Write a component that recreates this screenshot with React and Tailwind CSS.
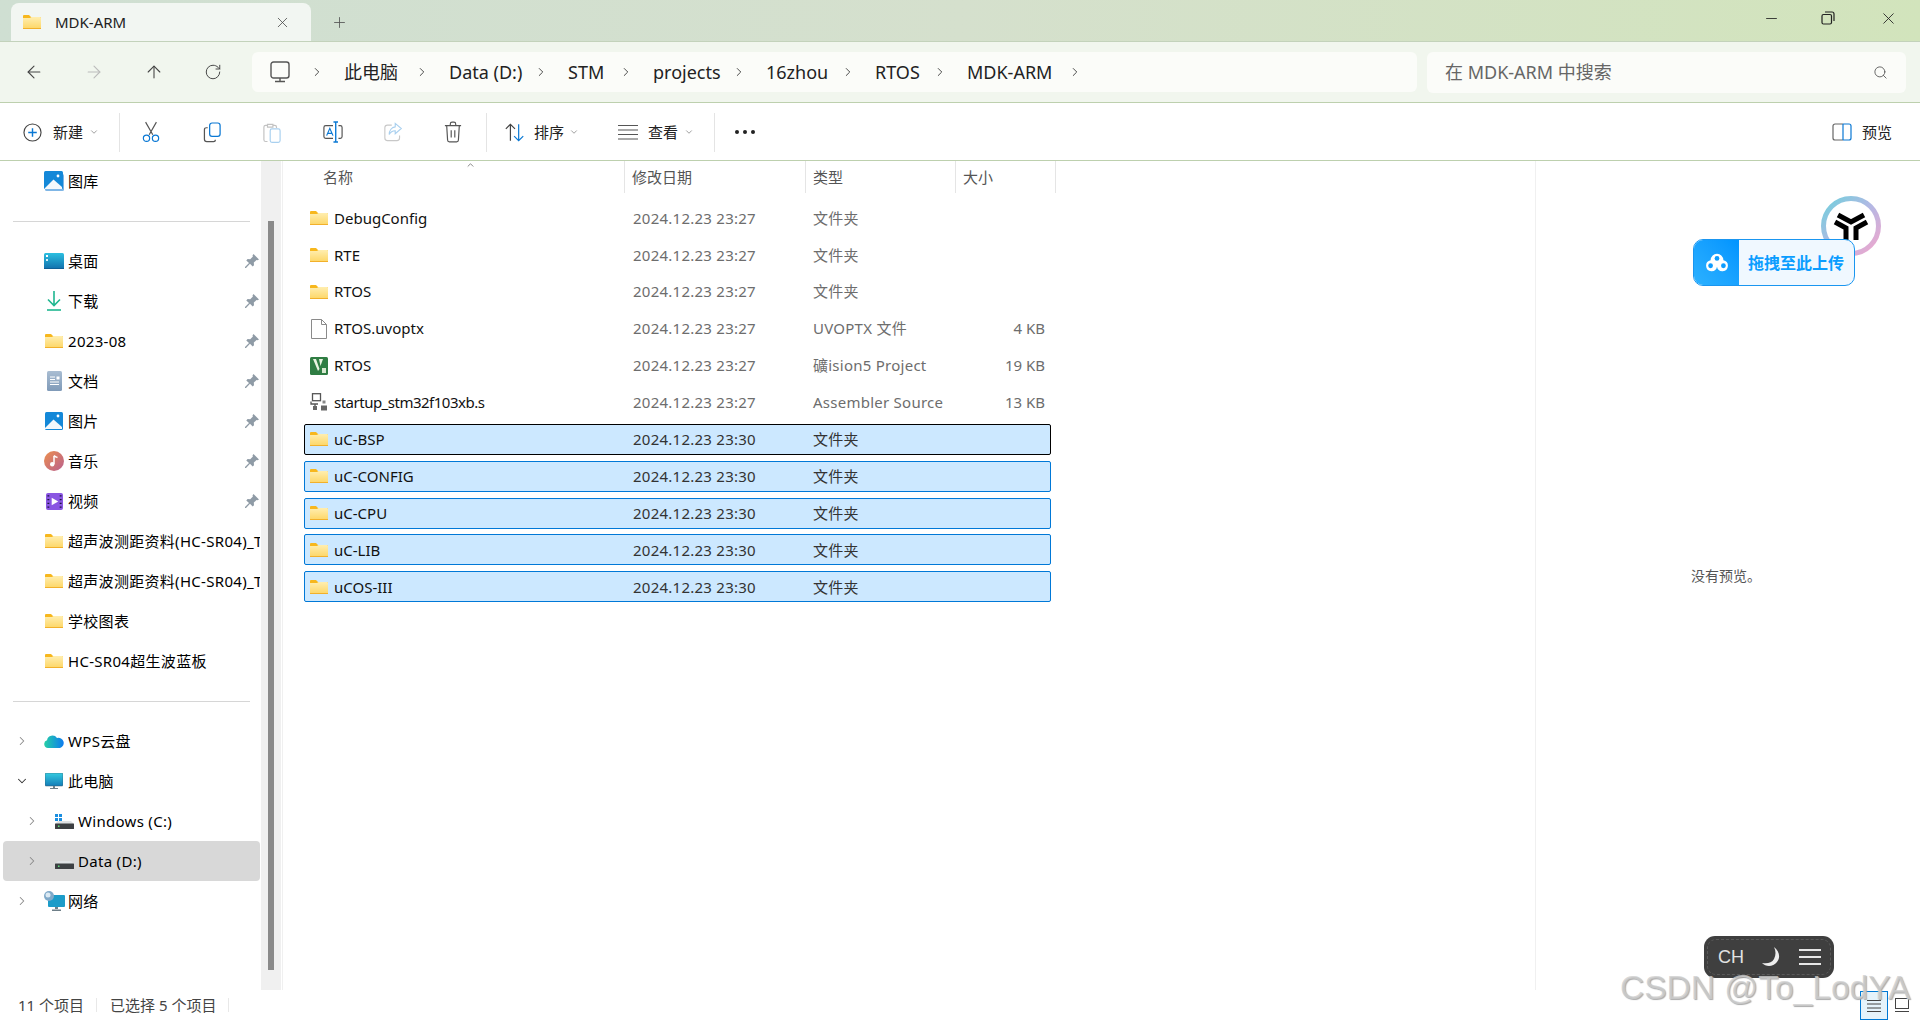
import { ArrowLeft, ArrowRight, ArrowUp, RotateCw, ChevronRight, ChevronDown, ChevronUp, Search, X, Plus, Minus } from 'lucide-react';

const Folder = ({ className = 'w-[18px] h-[14px]' }) => (
  <svg viewBox="0 0 18 14" className={`${className} shrink-0`}>
    <defs>
      <linearGradient id="fold" x1="0" y1="0" x2="0" y2="1">
        <stop offset="0" stopColor="#ffeeb0" />
        <stop offset="1" stopColor="#fdd665" />
      </linearGradient>
    </defs>
    <path d="M0 1a1 1 0 0 1 1-1h5l2 2h9a1 1 0 0 1 1 1v2H0z" fill="#f7b71d" />
    <path d="M0 3h7l1.5-1H17a1 1 0 0 1 1 1v10a1 1 0 0 1-1 1H1a1 1 0 0 1-1-1z" fill="url(#fold)" />
    <rect x="0" y="13" width="18" height="1" fill="#f2b02a" />
  </svg>
);

const Picture = ({ gallery }) => (
  <svg viewBox="0 0 20 20" className="w-[20px] h-[20px] shrink-0">
    {gallery && <rect x="1" y="3" width="19" height="17" rx="1.5" fill="#7fb6e6" />}
    <rect x="0" y="0" width={gallery ? 19 : 18} height={gallery ? 18 : 18} rx="1.5" transform={gallery ? '' : 'translate(1 1)'} fill="#1488d8" />
    <path d="M1 17 9.5 8.5 18 16v2H1z" fill="#f4f8fc" />
    <circle cx="14" cy="5" r="1.4" fill="#fff" />
  </svg>
);

const Desktop = () => (
  <svg viewBox="0 0 20 16" className="w-[20px] h-[16px] shrink-0">
    <defs>
      <linearGradient id="desk" x1="0" y1="0" x2="0" y2="1">
        <stop offset="0" stopColor="#2bbfe0" />
        <stop offset="1" stopColor="#1170ad" />
      </linearGradient>
    </defs>
    <rect width="20" height="16" rx="1.5" fill="url(#desk)" />
    <rect x="2" y="2" width="2" height="2" fill="#fff" />
    <rect x="2" y="6" width="2" height="2" fill="#d6f2fb" />
    <rect x="0" y="15" width="20" height="1" fill="#0f5f96" />
  </svg>
);

const Download = () => (
  <svg viewBox="0 0 16 20" className="w-[16px] h-[20px] shrink-0" fill="none" stroke="#1fb690" strokeWidth="1.6">
    <path d="M8 0v14M2 8.5l6 6 6-6" />
    <path d="M1 19h14" />
  </svg>
);

const Doc = () => (
  <svg viewBox="0 0 15 20" className="w-[15px] h-[20px] shrink-0">
    <defs>
      <linearGradient id="doc" x1="0" y1="0" x2="0" y2="1">
        <stop offset="0" stopColor="#a9bdd2" />
        <stop offset="1" stopColor="#7f9ab8" />
      </linearGradient>
    </defs>
    <rect width="15" height="20" rx="1.5" fill="url(#doc)" />
    <path d="M3 6h5M3 8.5h5M3 11h9M3 13.5h9" stroke="#fff" strokeWidth="1" />
    <rect x="9.5" y="5.5" width="3" height="3" fill="#fff" />
  </svg>
);

const Music = () => (
  <svg viewBox="0 0 20 20" className="w-[20px] h-[20px] shrink-0">
    <defs>
      <linearGradient id="mus" x1="0" y1="0" x2="1" y2="1">
        <stop offset="0" stopColor="#ec8f4e" />
        <stop offset="1" stopColor="#b9608f" />
      </linearGradient>
    </defs>
    <circle cx="10" cy="10" r="10" fill="url(#mus)" />
    <path d="M10 5v8" stroke="#fff" strokeWidth="1.5" />
    <path d="M10 4.5c1 1.5 2.5 1.5 3.5 2" stroke="#fff" strokeWidth="1.5" fill="none" />
    <circle cx="8.2" cy="13.2" r="2.2" fill="#fff" />
  </svg>
);

const Video = () => (
  <svg viewBox="0 0 18 18" className="w-[17px] h-[17px] shrink-0">
    <rect width="18" height="18" rx="2" fill="#8a56e2" />
    <path d="M6 5v8l7-4z" fill="#fff" />
    <path d="M1.5 3h2M1.5 7h2M1.5 11h2M1.5 15h2M14.500 3h2M14.500 7h2M14.500 11h2M14.500 15h2" stroke="#1d1440" strokeWidth="1.4" />
  </svg>
);

const Pin = () => (
  <svg viewBox="0 0 14 14" className="w-[14px] h-[14px] shrink-0" fill="#8f9ba6">
    <path d="M8.500 0 14 5.500l-1.500.8-1-.4-2.700 2.700.2 2.600-1.300 1.300-2.700-2.700L1 14l-1 0 0-1 4-3.900-2.700-2.700 1.300-1.300 2.600.2 2.700-2.700-.4-1z" />
  </svg>
);

const Cloud = () => (
  <svg viewBox="0 0 20 14" className="w-[20px] h-[14px] shrink-0">
    <defs>
      <linearGradient id="wps" x1="0" y1="0" x2="1" y2="0">
        <stop offset="0" stopColor="#25cfa6" />
        <stop offset="1" stopColor="#0e7bf0" />
      </linearGradient>
    </defs>
    <path d="M4 14a4 4 0 0 1-1-7.800A5.500 5.500 0 0 1 13 4a4.500 4.500 0 0 1 3 10z" fill="url(#wps)" />
  </svg>
);

const Monitor = () => (
  <svg viewBox="0 0 18 16" className="w-[18px] h-[16px] shrink-0">
    <defs>
      <linearGradient id="pc" x1="0" y1="0" x2="0" y2="1">
        <stop offset="0" stopColor="#35cbe0" />
        <stop offset="1" stopColor="#137db8" />
      </linearGradient>
    </defs>
    <rect width="18" height="13" rx="1" fill="url(#pc)" stroke="#3a5a6a" strokeWidth=".5" />
    <path d="M8 13h2v2H8zM5 15h8v1H5z" fill="#6e7f88" />
  </svg>
);

const Drive = ({ win }) => (
  <svg viewBox="0 0 19 15" className="w-[19px] h-[15px] shrink-0">
    {win && <path d="M0 0h3v3H0zM4 0h3v3H4zM0 4h3v3H0zM4 4h3v3H4z" fill="#1a8ee0" />}
    <path d="M3 7h13l3 3H0z" fill="#dfe2e4" />
    <rect x="0" y="9.500" width="19" height="5.500" rx=".5" fill="#3d4043" />
    <rect x="3" y="11.500" width="1.500" height="1.500" fill="#5ee07c" />
  </svg>
);

const Network = () => (
  <svg viewBox="0 0 21 20" className="w-[21px] h-[20px] shrink-0">
    <rect x="4" y="4" width="17" height="12" rx="1" fill="#1c9cc9" />
    <path d="M11 16h3v2h-3zM8 18.500h9V20H8z" fill="#6e7f88" />
    <circle cx="5" cy="5" r="5" fill="#7fa9c9" />
    <circle cx="4" cy="4" r="2.500" fill="#dbe9f3" />
  </svg>
);

const BlankFile = () => (
  <svg viewBox="0 0 18 20" className="w-[18px] h-[20px] shrink-0" fill="#fff" stroke="#8a8a8a" strokeWidth="1">
    <path d="M1.500.5h10l5 5v14h-15z" />
    <path d="M11.500.5v5h5" fill="none" />
  </svg>
);

const UVision = () => (
  <svg viewBox="0 0 18 18" className="w-[18px] h-[18px] shrink-0">
    <rect width="18" height="18" rx="1.500" fill="#2f7d43" />
    <path d="M3 2l5 12 1.500-2L6 2zM9 2l1.500 7L13 2z" fill="#e8f3e0" />
    <path d="M12 11h4v5h-4z" fill="#d7e8d0" />
  </svg>
);

const AsmFile = () => (
  <svg viewBox="0 0 18 18" className="w-[18px] h-[18px] shrink-0" fill="none" stroke="#555" strokeWidth="1.300">
    <rect x="2.500" y=".7" width="8" height="7" />
    <path d="M1 8.500v2.500h7M5 11v4" />
    <rect x="3" y="13" width="4" height="4" fill="#666" stroke="none" />
    <rect x="12.500" y="7.500" width="3" height="3" fill="#888" stroke="none" />
    <rect x="11" y="12.500" width="6" height="5" fill="#666" stroke="none" />
  </svg>
);

const Chev = ({ open }) =>
  open ? (
    <ChevronDown className="w-[14px] h-[14px] text-[#333]" strokeWidth={1.8} />
  ) : (
    <ChevronRight className="w-[14px] h-[14px] text-[#8a8a8a]" strokeWidth={1.8} />
  );

const pinned = [
  ['桌面', <Desktop />],
  ['下载', <span className="w-[20px] flex justify-center"><Download /></span>],
  ['2023-08', <Folder className="w-[18px] h-[14px] mx-px" />],
  ['文档', <span className="w-[20px] flex justify-center"><Doc /></span>],
  ['图片', <Picture />],
  ['音乐', <Music />],
  ['视频', <span className="w-[20px] flex justify-center"><Video /></span>],
];

const recent = ['超声波测距资料(HC-SR04)_TTL', '超声波测距资料(HC-SR04)_TTL', '学校图表', 'HC-SR04超生波蓝板'];

const files = [
  { name: 'DebugConfig', icon: <Folder />, date: '2024.12.23 23:27', type: '文件夹' },
  { name: 'RTE', icon: <Folder />, date: '2024.12.23 23:27', type: '文件夹' },
  { name: 'RTOS', icon: <Folder />, date: '2024.12.23 23:27', type: '文件夹' },
  { name: 'RTOS.uvoptx', icon: <BlankFile />, date: '2024.12.23 23:27', type: 'UVOPTX 文件', size: '4 KB' },
  { name: 'RTOS', icon: <UVision />, date: '2024.12.23 23:27', type: '礦ision5 Project', size: '19 KB' },
  { name: 'startup_stm32f103xb.s', tight: true, icon: <AsmFile />, date: '2024.12.23 23:27', type: 'Assembler Source', size: '13 KB' },
  { name: 'uC-BSP', icon: <Folder />, date: '2024.12.23 23:30', type: '文件夹', sel: 'focus' },
  { name: 'uC-CONFIG', icon: <Folder />, date: '2024.12.23 23:30', type: '文件夹', sel: 'on' },
  { name: 'uC-CPU', icon: <Folder />, date: '2024.12.23 23:30', type: '文件夹', sel: 'on' },
  { name: 'uC-LIB', icon: <Folder />, date: '2024.12.23 23:30', type: '文件夹', sel: 'on' },
  { name: 'uCOS-III', icon: <Folder />, date: '2024.12.23 23:30', type: '文件夹', sel: 'on' },
];

const crumbs = [
  ['此电脑', 'w-[53px]'],
  ['Data (D:)', 'w-[67px]'],
  ['STM', 'w-[33px]'],
  ['projects', 'w-[61px]'],
  ['16zhou', 'w-[57px]'],
  ['RTOS', 'w-[40px]'],
  ['MDK-ARM', 'w-[83px]'],
];

function SideRow({ icon, label, pin, chevron, indent, active }) {
  return (
    <div className={`h-10 ml-[3px] mr-px flex items-center rounded-[4px] ${active ? 'bg-[#d8d8d8]' : ''}`}>
      <div className={`flex justify-center shrink-0 ${indent ? 'w-[50px] pl-[8px]' : 'w-[37px] pl-[1px]'}`}>
        {chevron}
      </div>
      <div className={`flex items-center justify-center shrink-0 w-[22px] ${indent ? '' : 'ml-[3px]'}`}>{icon}</div>
      <span className="ml-[3px] flex-1 whitespace-nowrap overflow-hidden text-[15px] tracking-[0.3px] text-black">{label}</span>
      {pin && <span className="pr-[1px]"><Pin /></span>}
    </div>
  );
}

function Sidebar() {
  return (
    <aside className="w-[283px] shrink-0 flex border-r border-[#f0f0f0]">
      <div className="w-[261px] shrink-0 overflow-hidden">
        <SideRow icon={<Picture gallery />} label="图库" />
        <div className="h-10 flex items-center pl-[13px] pr-[11px]"><div className="h-px w-full bg-[#d6d6d6]" /></div>
        {pinned.map(([label, icon]) => (
          <SideRow key={label} icon={icon} label={label} pin />
        ))}
        {recent.map((label, i) => (
          <SideRow key={i} icon={<Folder />} label={label} />
        ))}
        <div className="h-10 flex items-center pl-[13px] pr-[11px]"><div className="h-px w-full bg-[#d6d6d6]" /></div>
        <SideRow icon={<Cloud />} label="WPS云盘" chevron={<Chev />} />
        <SideRow icon={<Monitor />} label="此电脑" chevron={<Chev open />} />
        <SideRow icon={<Drive win />} label="Windows (C:)" chevron={<Chev />} indent />
        <SideRow icon={<Drive />} label="Data (D:)" chevron={<Chev />} indent active />
        <SideRow icon={<Network />} label="网络" chevron={<Chev />} />
      </div>
      <div className="w-[20px] shrink-0 bg-[#f0f0f0] pt-[60px] pb-[20px] px-[7px]">
        <div className="h-full w-[6px] bg-[#8a8a8a]" />
      </div>
    </aside>
  );
}

function FileRow({ f }) {
  const box = f.sel === 'focus'
    ? 'bg-[#cce8ff] border border-black rounded-[2px]'
    : f.sel === 'on'
      ? 'bg-[#cce8ff] border border-[#0078d7] rounded-[2px]'
      : 'border border-transparent';
  const sub = f.sel ? 'text-[#333]' : 'text-[#6d6d6d]';
  return (
    <div className="h-[36.9px] flex items-center">
      <div className={`h-[31px] w-full flex items-center text-[15px] ${box}`}>
        <div className="w-[328px] shrink-0 flex items-center pl-[5px]">
          <span className="w-[18px] flex justify-center">{f.icon}</span>
          <span className={`ml-[6px] text-[#111] whitespace-nowrap ${f.tight ? 'tracking-[-0.5px]' : ''}`}>{f.name}</span>
        </div>
        <div className={`w-[180px] shrink-0 tracking-[0.25px] ${sub}`}>{f.date}</div>
        <div className={`w-[166px] shrink-0 whitespace-nowrap tracking-[0.25px] ${sub}`}>{f.type}</div>
        <div className={`flex-1 text-right pr-[5px] whitespace-nowrap ${sub}`}>{f.size}</div>
      </div>
    </div>
  );
}

function FileList() {
  const heads = [
    ['名称', 'w-[342px] pl-[40px]'],
    ['修改日期', 'w-[181px] pl-[7px]'],
    ['类型', 'w-[150px] pl-[7px]'],
    ['大小', 'w-[100px] pl-[7px]'],
  ];
  return (
    <div className="flex-1 relative">
      <ChevronUp className="absolute left-[180px] -top-[1px] w-[15px] h-[10px] text-[#444]" strokeWidth={1.5} />
      <div className="h-[32px] flex">
        {heads.map(([h, c]) => (
          <div key={h} className={`${c} flex items-center border-r border-[#e5e5e5] text-[15px] text-[#555]`}>{h}</div>
        ))}
      </div>
      <div className="ml-[21px] w-[747px] pt-[6.5px]">
        {files.map((f, i) => (
          <FileRow key={i} f={f} />
        ))}
      </div>
    </div>
  );
}

const TB = ({ children, className = 'w-[60px]' }) => (
  <div className={`${className} h-full flex items-center justify-center shrink-0`}>{children}</div>
);
const Sep = () => <div className="w-px h-[39px] bg-[#e4e4e4] shrink-0" />;
const Caret = () => <ChevronDown className="w-[10px] h-[10px] text-[#666]" strokeWidth={1.5} />;

function Toolbar() {
  return (
    <div className="h-[58px] pt-px border-b border-[#bdd0ae] bg-white flex items-center pl-[23px] pr-[28px] shrink-0">
      <div className="w-[96px] flex items-center shrink-0">
        <svg viewBox="0 0 20 20" className="w-[19px] h-[19px]" fill="none">
          <circle cx="10" cy="10" r="9" stroke="#444" strokeWidth="1.200" />
          <path d="M10 5.500v9M5.500 10h9" stroke="#0a78d4" strokeWidth="1.500" />
        </svg>
        <span className="ml-[11px] text-[15px] text-[#222]">新建</span>
        <span className="ml-[6px]"><Caret /></span>
      </div>
      <Sep />
      <TB className="w-[62px]">
        <svg viewBox="0 0 20 24" className="w-[18px] h-[24px]" fill="none" strokeWidth="1.300">
          <path d="M4 1l8 14M16 1 8 15" stroke="#555" />
          <circle cx="5" cy="19" r="3.500" stroke="#0a78d4" />
          <circle cx="15" cy="19" r="3.500" stroke="#0a78d4" />
        </svg>
      </TB>
      <TB>
        <svg viewBox="0 0 20 22" className="w-[19px] h-[21px]" fill="none" strokeWidth="1.300">
          <path d="M5 6H3.500A2 2 0 0 0 1.500 8v10a2.500 2.500 0 0 0 2.500 2.500h7a2 2 0 0 0 2-2" stroke="#555" />
          <rect x="7" y="1" width="11" height="14" rx="2.500" stroke="#0a78d4" />
        </svg>
      </TB>
      <TB>
        <svg viewBox="0 0 20 24" className="w-[18px] h-[23px]" fill="none" strokeWidth="1.300">
          <path d="M5 4H3a2 2 0 0 0-2 2v14a2 2 0 0 0 2 2h2" stroke="#c2c2c2" />
          <path d="M5 3h6v3H5zM11 4h2a2 2 0 0 1 2 2v1" stroke="#c2c2c2" />
          <rect x="8" y="8" width="11" height="15" rx="2" stroke="#a9d0ef" />
        </svg>
      </TB>
      <TB className="w-[61px]">
        <svg viewBox="0 0 22 24" className="w-[20px] h-[24px]" fill="none" strokeWidth="1.300">
          <path d="M11 5H3a2 2 0 0 0-2 2v10a2 2 0 0 0 2 2h8M17 5h2a2 2 0 0 1 2 2v10a2 2 0 0 1-2 2h-2" stroke="#555" />
          <path d="M14 1v22M11.500 1h5M11.500 23h5" stroke="#0a78d4" strokeWidth="1.500" />
          <path d="M4 16l3.500-8 3.500 8M5 13.500h5" stroke="#0a78d4" />
        </svg>
      </TB>
      <TB>
        <svg viewBox="0 0 22 22" className="w-[19px] h-[20px]" fill="none" strokeWidth="1.300">
          <path d="M9 3H4a3 3 0 0 0-3 3v12a3 3 0 0 0 3 3h11a3 3 0 0 0 3-3v-3" stroke="#c8c8c8" />
          <path d="M13 1l7 6-7 6V9.500C9.500 9.500 7.500 11 6 14c0-5 3-8.500 7-9z" stroke="#a9d0ef" />
        </svg>
      </TB>
      <TB>
        <svg viewBox="0 0 20 24" className="w-[18px] h-[22px]" fill="none" stroke="#555" strokeWidth="1.300">
          <path d="M1 5h18M7 5V3a2 2 0 0 1 2-2h2a2 2 0 0 1 2 2v2M3 5l1 16a2 2 0 0 0 2 2h8a2 2 0 0 0 2-2l1-16M8 10v8M12 10v8" />
        </svg>
      </TB>
      <div className="ml-[3px]"><Sep /></div>
      <div className="w-[114px] ml-[17px] flex items-center shrink-0">
        <svg viewBox="0 0 24 20" className="w-[22px] h-[19px]" fill="none" strokeWidth="1.300">
          <path d="M7 19V1M2 6l5-5 5 5" stroke="#444" />
          <path d="M16 1v18M11 14l5 5 5-5" stroke="#0a78d4" />
        </svg>
        <span className="ml-[8px] text-[15px] text-[#222]">排序</span>
        <span className="ml-[5px]"><Caret /></span>
      </div>
      <div className="w-[90px] flex items-center shrink-0">
        <svg viewBox="0 0 20 16" className="w-[20px] h-[16px]" fill="none" stroke="#555" strokeWidth="1.200">
          <path d="M0 1.500h20M0 6h20M0 10.500h20M0 15h20" />
        </svg>
        <span className="ml-[10px] text-[15px] text-[#222]">查看</span>
        <span className="ml-[6px]"><Caret /></span>
      </div>
      <div className="ml-[6px]"><Sep /></div>
      <div className="ml-[20px] flex gap-[4px] items-center">
        <span className="w-[4px] h-[4px] rounded-full bg-[#222]" />
        <span className="w-[4px] h-[4px] rounded-full bg-[#222]" />
        <span className="w-[4px] h-[4px] rounded-full bg-[#222]" />
      </div>
      <div className="ml-auto flex items-center">
        <svg viewBox="0 0 20 18" className="w-[20px] h-[18px]" fill="none" strokeWidth="1.200">
          <path d="M11 1H3a2 2 0 0 0-2 2v12a2 2 0 0 0 2 2h8" stroke="#666" />
          <path d="M11 1v16M11 1h6a2 2 0 0 1 2 2v12a2 2 0 0 1-2 2h-6" stroke="#0a78d4" />
        </svg>
        <span className="ml-[10px] text-[15px] text-[#222]">预览</span>
      </div>
    </div>
  );
}

function AddressBar() {
  return (
    <div className="h-[61px] bg-[#f1f6ee] border-b border-[#bdd0ae] flex items-center shrink-0">
      <div className="w-[252px] flex items-center shrink-0 pl-[24px] gap-[40px]">
        <ArrowLeft className="w-[20px] h-[20px] text-[#444]" strokeWidth={1.3} />
        <ArrowRight className="w-[20px] h-[20px] text-[#bbb]" strokeWidth={1.3} />
        <ArrowUp className="w-[20px] h-[20px] text-[#444]" strokeWidth={1.3} />
        <RotateCw className="w-[18px] h-[18px] text-[#444]" strokeWidth={1.3} />
      </div>
      <div className="w-[1165px] h-[40px] rounded-[6px] bg-[#fbfcf9] flex items-center pl-[18px] text-[18px] text-[#222] shrink-0">
        <svg viewBox="0 0 20 22" className="w-[20px] h-[22px] shrink-0" fill="none" stroke="#555" strokeWidth="1.400">
          <rect x="1" y="1" width="18" height="16" rx="2.500" />
          <path d="M10 17v3M5 20.500h10" />
        </svg>
        <ChevronRight className="ml-[20px] w-[14px] h-[14px] text-[#333] shrink-0" strokeWidth={1.5} />
        {crumbs.map(([c, w]) => (
          <div key={c} className="flex items-center shrink-0">
            <span className={`${w} ml-[20px] whitespace-nowrap`}>{c}</span>
            <ChevronRight className="ml-[18px] w-[14px] h-[14px] text-[#333] shrink-0" strokeWidth={1.5} />
          </div>
        ))}
      </div>
      <div className="ml-[10px] w-[479px] h-[41px] rounded-[6px] bg-[#fbfcf9] flex items-center pl-[18px] pr-[18px] text-[18px] text-[#666] shrink-0">
        <span className="flex-1">在 MDK-ARM 中搜索</span>
        <Search className="w-[15px] h-[15px] text-[#555]" strokeWidth={1.4} />
      </div>
    </div>
  );
}

function TabBar() {
  return (
    <div className="h-[42px] border-b border-[#c3d2bb] bg-gradient-to-r from-[#cfdfd2] via-[#d5e0cd] to-[#d2e4bc] flex items-end shrink-0">
      <div className="ml-[11px] w-[300px] h-[38px] rounded-t-[8px] bg-[#f2f6f2] flex items-center pl-[12px] pr-[20px]">
        <Folder />
        <span className="ml-[14px] text-[15px] text-[#222] flex-1">MDK-ARM</span>
        <X className="w-[17px] h-[17px] text-[#444]" strokeWidth={1.1} />
      </div>
      <div className="ml-[20px] h-[38px] flex items-center">
        <Plus className="w-[17px] h-[17px] text-[#555]" strokeWidth={1.2} />
      </div>
      <div className="ml-auto h-[36px] self-start flex items-center pr-[22px] gap-[41px]">
        <Minus className="w-[17px] h-[17px] text-[#222]" strokeWidth={1.2} />
        <svg viewBox="0 0 14 14" className="w-[14px] h-[14px]" fill="none" stroke="#222" strokeWidth="1.200">
          <rect x="1" y="3.500" width="9.500" height="9.500" rx="1.500" />
          <path d="M4 1h7a2 2 0 0 1 2 2v7" />
        </svg>
        <X className="ml-[3px] w-[19px] h-[19px] text-[#222]" strokeWidth={1.1} />
      </div>
    </div>
  );
}

function StatusBar() {
  return (
    <div className="h-[30px] flex items-center pl-[18px] text-[15px] text-[#444] shrink-0">
      <span className="w-[78px]">11 个项目</span>
      <span className="w-px h-[14px] bg-[#e8e8e8]" />
      <span className="ml-[13px] w-[118px] whitespace-nowrap">已选择 5 个项目</span>
      <span className="w-px h-[14px] bg-[#e8e8e8]" />
      <div className="ml-auto flex items-center pr-[11px]">
        <div className="w-[28px] h-[29px] mt-px bg-[#e5f3fb] border border-[#0078d4] flex items-center justify-center">
          <svg viewBox="0 0 14 12" className="w-[14px] h-[12px]" fill="none" stroke="#444">
            <path d="M0 .5h14M0 4h14M0 8h14M0 11.500h14" />
          </svg>
        </div>
        <svg viewBox="0 0 14 14" className="ml-[7px] w-[14px] h-[14px]" fill="none" stroke="#444">
          <rect x=".5" y=".5" width="13" height="10" />
          <path d="M0 13.500h14" />
        </svg>
      </div>
    </div>
  );
}

function Overlays() {
  return (
    <>
      <svg viewBox="0 0 60 60" className="absolute left-[1821px] top-[196px] w-[60px] h-[60px]">
        <defs>
          <linearGradient id="ring" x1="0" y1="0" x2="1" y2="1">
            <stop offset="0" stopColor="#6fd0dc" />
            <stop offset=".5" stopColor="#b4b8e4" />
            <stop offset="1" stopColor="#f2a6cc" />
          </linearGradient>
        </defs>
        <circle cx="30" cy="30" r="27.500" fill="#fff" stroke="url(#ring)" strokeWidth="5" />
        <g fill="none" stroke="#000" strokeWidth="5">
          <path d="M17 19l13 7 13-7" />
          <path d="M14 26l11 6v12" />
          <path d="M46 26l-11 6v12" />
        </g>
      </svg>
      <div className="absolute left-[1693px] top-[239px] w-[162px] h-[47px] rounded-[10px] border border-[#1a96f0] bg-[#f0f8ff] flex items-center overflow-hidden">
        <div className="w-[45px] h-full bg-gradient-to-tr from-[#2bb1ff] to-[#0094ff] flex items-center justify-center">
          <svg viewBox="0 0 28 24" className="w-[26px] h-[22px]">
            <path d="M7 9a6 6 0 1 0 7 7 6 6 0 1 0 7-7 6 6 0 1 0-14 0z" fill="#fff" />
            <circle cx="14" cy="7" r="2.600" fill="#0c9cff" />
            <circle cx="7" cy="15" r="2.600" fill="#0c9cff" />
            <circle cx="21" cy="15" r="2.600" fill="#0c9cff" />
          </svg>
        </div>
        <span className="ml-[9px] text-[16px] font-bold text-[#0b9dff] whitespace-nowrap">拖拽至此上传</span>
      </div>
      <div className="absolute left-[1704px] top-[936px] w-[130px] h-[42px] rounded-[11px] bg-[#3f3f3f] flex items-center pl-[14px] font-['Liberation_Sans',sans-serif] text-[18px] text-[#e2e2e2]">
        <span className="absolute inset-[3px] rounded-[9px] border border-dashed border-[#5a5a5a]" />
        <span>CH</span>
        <svg viewBox="0 0 20 20" className="ml-[17px] w-[20px] h-[20px]" fill="#eee">
          <path d="M13 0c5 4 7 10 3 15s-11 5-15 1c5 1 10 0 12-4s2-8 0-12z" />
        </svg>
        <svg viewBox="0 0 22 16" className="ml-[18px] w-[22px] h-[16px]" stroke="#e6e6e6" strokeWidth="2">
          <path d="M0 1h22M0 8h22M0 15h22" />
        </svg>
      </div>
      <div className="absolute left-[1620px] top-[968px] font-['Liberation_Sans',sans-serif] text-[33.5px] leading-[40px] whitespace-nowrap text-[#cfcfcf]/80 [text-shadow:1px_1px_1px_#aaa]">
        CSDN @To_LodYA
      </div>
    </>
  );
}

export default function App() {
  return (
    <div className="relative w-[1920px] h-[1020px] overflow-hidden bg-white flex flex-col font-['Noto_Sans','Noto_Sans_CJK_SC',sans-serif]">
      <TabBar />
      <AddressBar />
      <Toolbar />
      <div className="h-[829px] flex shrink-0">
        <Sidebar />
        <FileList />
        <div className="w-[385px] shrink-0 border-l border-[#f0f0f0] flex items-center justify-center pr-[4px] text-[14px] text-[#555]">
          没有预览。
        </div>
      </div>
      <StatusBar />
      <Overlays />
    </div>
  );
}
